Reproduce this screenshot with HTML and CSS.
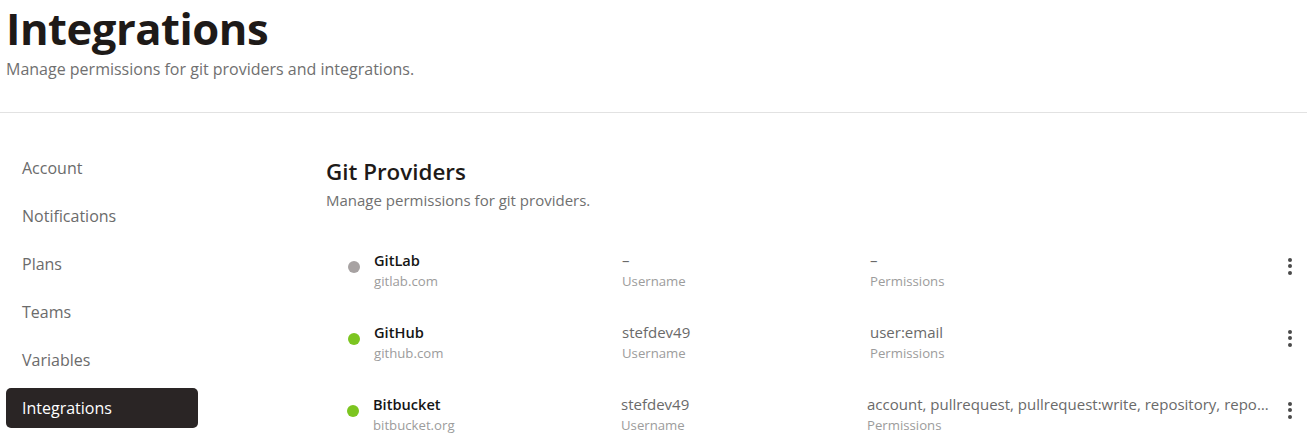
FILE: index.html
```html
<!DOCTYPE html>
<html lang="en">
<head>
<meta charset="utf-8">
<title>Integrations</title>
<link rel="stylesheet" href="styles.css">
</head>
<body>
<header class="page-header">
  <h1 class="page-title">Integrations</h1>
  <p class="page-subtitle">Manage permissions for git providers and integrations.</p>
</header>
<div class="layout">
  <nav class="sidebar">
    <a class="nav-item">Account</a>
    <a class="nav-item">Notifications</a>
    <a class="nav-item">Plans</a>
    <a class="nav-item">Teams</a>
    <a class="nav-item">Variables</a>
    <a class="nav-item nav-item-active">Integrations</a>
  </nav>
  <main class="content">
    <h2 class="section-title">Git Providers</h2>
    <p class="section-subtitle">Manage permissions for git providers.</p>
    <div class="provider-list">
      <div class="provider-row">
        <span class="status-dot status-off"></span>
        <div class="col col-name">
          <div class="cell-main name">GitLab</div>
          <div class="cell-sub">gitlab.com</div>
        </div>
        <div class="col col-user">
          <div class="cell-main">–</div>
          <div class="cell-sub">Username</div>
        </div>
        <div class="col col-perm">
          <div class="cell-main">–</div>
          <div class="cell-sub">Permissions</div>
        </div>
        <button class="kebab" aria-label="More"><span></span><span></span><span></span></button>
      </div>
      <div class="provider-row">
        <span class="status-dot status-on"></span>
        <div class="col col-name">
          <div class="cell-main name">GitHub</div>
          <div class="cell-sub">github.com</div>
        </div>
        <div class="col col-user">
          <div class="cell-main">stefdev49</div>
          <div class="cell-sub">Username</div>
        </div>
        <div class="col col-perm">
          <div class="cell-main">user:email</div>
          <div class="cell-sub">Permissions</div>
        </div>
        <button class="kebab" aria-label="More"><span></span><span></span><span></span></button>
      </div>
      <div class="provider-row provider-row-wide">
        <span class="status-dot status-on"></span>
        <div class="col col-name">
          <div class="cell-main name">Bitbucket</div>
          <div class="cell-sub">bitbucket.org</div>
        </div>
        <div class="col col-user">
          <div class="cell-main">stefdev49</div>
          <div class="cell-sub">Username</div>
        </div>
        <div class="col col-perm">
          <div class="cell-main truncate">account, pullrequest, pullrequest:write, repository, repository:write, webhook</div>
          <div class="cell-sub">Permissions</div>
        </div>
        <button class="kebab" aria-label="More"><span></span><span></span><span></span></button>
      </div>
    </div>
  </main>
</div>
</body>
</html>
```

FILE: styles.css
```css
* { box-sizing: border-box; }

html, body {
  margin: 0;
  padding: 0;
  background: #ffffff;
  font-family: "Open Sans", "Noto Sans", "Liberation Sans", sans-serif;
  color: #1e1a18;
  overflow: hidden;
}

.page-header {
  padding: 0 6px;
  height: 113px;
  border-bottom: 1px solid #e2e2e2;
}

.page-title {
  margin: 0;
  font-size: 43.6px;
  line-height: 56px;
  font-weight: 700;
  letter-spacing: -0.5px;
  color: #1e1a18;
}

.page-subtitle {
  margin: 0;
  font-size: 16px;
  line-height: 26px;
  color: #707070;
}

.layout {
  display: flex;
}

.sidebar {
  width: 326px;
  flex: none;
  padding: 35px 0 0 6px;
  display: flex;
  flex-direction: column;
  gap: 8px;
}

.nav-item {
  width: 192px;
  height: 40px;
  padding: 0 16px;
  display: flex;
  align-items: center;
  font-size: 16px;
  color: #6b6b6b;
  border-radius: 5px;
}

.nav-item-active {
  background: #2a2525;
  color: #ffffff;
}

.content {
  flex: 1;
  padding-top: 44px;
  min-width: 0;
}

.section-title {
  margin: 0;
  font-size: 22.4px;
  line-height: 30px;
  font-weight: 600;
  color: #1e1a18;
}

.section-subtitle {
  margin: 0;
  font-size: 15px;
  line-height: 26px;
  color: #707070;
}

.provider-list {
  margin-top: 36px;
  display: flex;
  flex-direction: column;
  gap: 28px;
}

.provider-row {
  display: flex;
  align-items: flex-start;
  height: 44px;
  padding-left: 22px;
}

.provider-row-wide {
  padding-left: 21px;
}

.status-dot {
  width: 12px;
  height: 12px;
  border-radius: 50%;
  flex: none;
  margin-right: 14px;
  margin-top: 12px;
}

.status-off { background: #a7a2a2; }
.status-on { background: #7cc520; }

.col {
  display: flex;
  flex-direction: column;
  min-width: 0;
}

.col-name { width: 248px; flex: none; }
.col-user { width: 248px; flex: none; }
.col-perm { width: 404px; flex: none; }

.provider-row-wide .col-user { width: 247px; }
.provider-row-wide .col-perm { margin-left: -1px; }

.cell-main {
  font-size: 15px;
  line-height: 22px;
  color: #6a6a6a;
}

.cell-main.name {
  font-size: 14.6px;
  font-weight: 600;
  color: #151515;
}

.cell-sub {
  font-size: 13.2px;
  line-height: 21px;
  color: #9c9c9c;
}

.truncate {
  white-space: nowrap;
  overflow: hidden;
  text-overflow: ellipsis;
}

.kebab {
  margin-left: auto;
  margin-right: 5px;
  margin-top: 5px;
  width: 24px;
  height: 24px;
  padding: 0;
  border: 0;
  background: transparent;
  display: flex;
  flex-direction: column;
  align-items: center;
  justify-content: center;
  gap: 2.5px;
}

.kebab span {
  width: 4px;
  height: 4px;
  border-radius: 50%;
  background: #4a4a4a;
}
```
